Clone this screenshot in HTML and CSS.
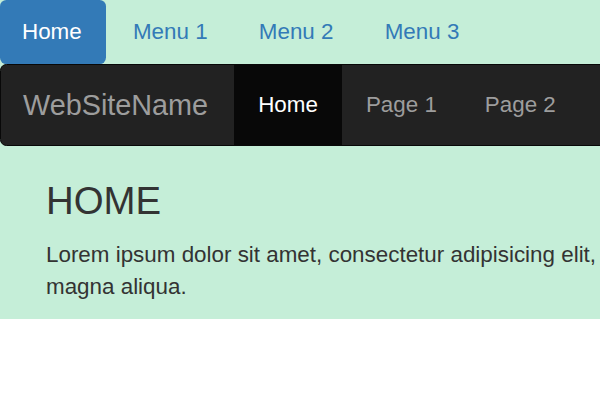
FILE: index.html
```html
<!DOCTYPE html>
<html>
<head>
<meta charset="utf-8">
<link rel="stylesheet" href="styles.css">
</head>
<body>
<div class="page">
  <ul class="pills">
    <li class="pill active"><a href="#">Home</a></li>
    <li class="pill"><a href="#">Menu 1</a></li>
    <li class="pill"><a href="#">Menu 2</a></li>
    <li class="pill"><a href="#">Menu 3</a></li>
  </ul>
  <nav class="navbar">
    <a class="brand" href="#">WebSiteName</a>
    <ul class="navlinks">
      <li class="active"><a href="#">Home</a></li>
      <li><a href="#">Page 1</a></li>
      <li><a href="#">Page 2</a></li>
    </ul>
  </nav>
  <div class="content">
    <h3 class="title">HOME</h3>
    <p class="text">Lorem ipsum dolor sit amet, consectetur adipisicing elit, sed do eiusmod tempor incididunt ut labore et dolore magna aliqua.</p>
  </div>
</div>
</body>
</html>
```
FILE: styles.css
```css
html, body {
  margin: 0;
  padding: 0;
  overflow: hidden;
  background: #fff;
}
.page {
  width: 1200px;
  background: #c5eed8;
  font-family: "Liberation Sans", Arial, sans-serif;
  font-size: 22.4px;
  line-height: 32px;
  color: #333;
}
a { text-decoration: none; }
ul { list-style: none; margin: 0; padding: 0; }
.pills {
  display: flex;
  gap: 3.2px;
}
.pill a {
  display: block;
  padding: 16px 24px;
  border-radius: 6.4px;
  color: #337ab7;
}
.pill.active a {
  background: #337ab7;
  color: #fff;
  padding-left: 22px;
  padding-right: 24px;
}
.navbar {
  display: flex;
  height: 80px;
  background: #222;
  border: 1px solid #080808;
  border-radius: 6.4px;
}
.brand {
  padding: 24px 26px 24px 22px;
  font-size: 28.8px;
  line-height: 32px;
  color: #9d9d9d;
}
.navlinks {
  display: flex;
}
.navlinks a {
  display: block;
  padding: 24px;
  color: #9d9d9d;
}
.navlinks .active a {
  background: #080808;
  color: #fff;
}
.content {
  padding: 34px 46px 0;
  overflow: hidden;
}
.title {
  margin: 0 0 17px;
  font-size: 38.4px;
  line-height: 1.1;
  font-weight: 500;
}
.text {
  margin: 0 0 16px;
}
```
